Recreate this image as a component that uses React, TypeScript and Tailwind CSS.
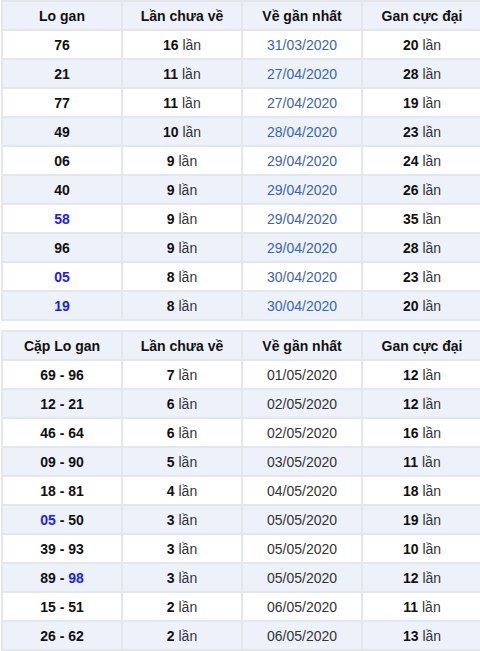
import React from 'react';

type Row = { lo: React.ReactNode; lan: number; date: string; max: number };

const blue = (t: string) => <span className="text-[#1b1bf5]">{t}</span>;

const logan: Row[] = [
  { lo: '76', lan: 16, date: '31/03/2020', max: 20 },
  { lo: '21', lan: 11, date: '27/04/2020', max: 28 },
  { lo: '77', lan: 11, date: '27/04/2020', max: 19 },
  { lo: '49', lan: 10, date: '28/04/2020', max: 23 },
  { lo: '06', lan: 9, date: '29/04/2020', max: 24 },
  { lo: '40', lan: 9, date: '29/04/2020', max: 26 },
  { lo: blue('58'), lan: 9, date: '29/04/2020', max: 35 },
  { lo: '96', lan: 9, date: '29/04/2020', max: 28 },
  { lo: blue('05'), lan: 8, date: '30/04/2020', max: 23 },
  { lo: blue('19'), lan: 8, date: '30/04/2020', max: 20 },
];

const capLogan: Row[] = [
  { lo: '69 - 96', lan: 7, date: '01/05/2020', max: 12 },
  { lo: '12 - 21', lan: 6, date: '02/05/2020', max: 12 },
  { lo: '46 - 64', lan: 6, date: '02/05/2020', max: 16 },
  { lo: '09 - 90', lan: 5, date: '03/05/2020', max: 11 },
  { lo: '18 - 81', lan: 4, date: '04/05/2020', max: 18 },
  { lo: <>{blue('05')} - 50</>, lan: 3, date: '05/05/2020', max: 19 },
  { lo: '39 - 93', lan: 3, date: '05/05/2020', max: 10 },
  { lo: <>89 - {blue('98')}</>, lan: 3, date: '05/05/2020', max: 12 },
  { lo: '15 - 51', lan: 2, date: '06/05/2020', max: 11 },
  { lo: '26 - 62', lan: 2, date: '06/05/2020', max: 13 },
];

function Times({ n }: { n: number }) {
  return (
    <span>
      <b className="font-bold text-[#111]">{n}</b> <span className="text-[#333]">lần</span>
    </span>
  );
}

function GanTable({ first, rows, dateColor }: { first: string; rows: Row[]; dateColor: string }) {
  const cell = 'h-[27px] flex items-center justify-center';
  return (
    <div className="ml-px w-[483px] bg-[#e3e6eb] p-[2px] grid grid-cols-[118px_118px_118px_118px] gap-[2px]">
      {[first, 'Lần chưa về', 'Về gần nhất', 'Gan cực đại'].map((h) => (
        <div key={h} className={`${cell} bg-[#edf1f9] font-bold text-[#111]`}>
          {h}
        </div>
      ))}
      {rows.map((r, i) => {
        const bg = i % 2 === 0 ? 'bg-white' : 'bg-[#edf2fa]';
        return (
          <React.Fragment key={i}>
            <div className={`${cell} ${bg} font-bold text-[#111]`}>
              <span>{r.lo}</span>
            </div>
            <div className={`${cell} ${bg}`}>
              <Times n={r.lan} />
            </div>
            <div className={`${cell} ${bg} ${dateColor}`}>{r.date}</div>
            <div className={`${cell} ${bg}`}>
              <Times n={r.max} />
            </div>
          </React.Fragment>
        );
      })}
    </div>
  );
}

export default function App() {
  return (
    <div
      className="w-[480px] h-[651px] overflow-hidden bg-white text-[14px] leading-none"
      style={{ fontFamily: '"Liberation Sans", Arial, sans-serif' }}
    >
      <div className="flex flex-col gap-[9px]">
        <GanTable first="Lo gan" rows={logan} dateColor="text-[#3a63b3]" />
        <GanTable first="Cặp Lo gan" rows={capLogan} dateColor="text-[#333]" />
      </div>
    </div>
  );
}
